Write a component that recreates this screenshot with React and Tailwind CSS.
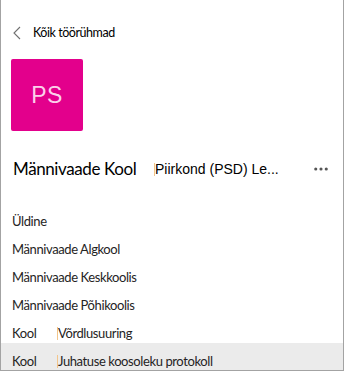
import { MoreHorizontal } from 'lucide-react'

const segoe = { fontFamily: 'Lato, "Liberation Sans", sans-serif' }

const Caret = () => <span className="inline-block w-px h-[13px] bg-[#f3c58a] align-middle" />

const rows = [
  { label: 'Üldine' },
  { label: 'Männivaade Algkool' },
  { label: 'Männivaade Keskkoolis' },
  { label: 'Männivaade Põhikoolis' },
  { prefix: 'Kool', label: 'Võrdlusuuring' },
  { prefix: 'Kool', label: 'Juhatuse koosoleku protokoll', active: true },
]

export default function App() {
  return (
    <div
      className="w-[344px] h-[371px] bg-white border-l border-r border-b border-[#a3a3a3] overflow-hidden text-[#252424]"
      style={segoe}
    >
      {/* back link */}
      <div className="flex items-center h-[20px] mt-[23px] pl-[11px]">
        <svg width="10" height="14" viewBox="0 0 10 14" className="text-[#707070]">
          <polyline points="8,1 2,7 8,13" fill="none" stroke="currentColor" strokeWidth="1.1" />
        </svg>
        <span className="ml-[11px] text-[12.5px] text-black tracking-[-0.45px]">Kõik töörühmad</span>
      </div>

      {/* team tile */}
      <div className="ml-[10px] mt-[16px] w-[72px] h-[72px] rounded-[2px] bg-[#e3008c] flex items-center justify-center">
        <span className="text-[23px] text-[#fbd0ea] tracking-[0.5px]" style={{ fontFamily: '"Liberation Sans", sans-serif' }}>PS</span>
      </div>

      {/* title row */}
      <div className="flex items-center h-[28px] mt-[24px] pl-[12px] pr-[13px]">
        <span className="text-[17px] text-black tracking-[-0.4px] w-[141px]">Männivaade Kool</span>
        <Caret />
        <span className="text-[14px] text-black" style={{ fontFamily: '"Liberation Sans", sans-serif' }}>
          Piirkond (PSD) Le...
        </span>
        <MoreHorizontal className="ml-auto w-[18px] h-[18px] text-[#555]" strokeWidth={2.2} />
      </div>

      {/* channel list */}
      <div className="mt-[20px]">
        {rows.map((r) => (
          <div
            key={r.label}
            className={`flex items-center h-[28px] pt-[9px] pl-[11px] text-[13px] tracking-[-0.4px] ${r.active ? 'bg-[#ebebeb]' : ''}`}
          >
            {r.prefix && (
              <>
                <span className="w-[45px]">{r.prefix}</span>
                <Caret />
              </>
            )}
            <span>{r.label}</span>
          </div>
        ))}
      </div>
    </div>
  )
}
